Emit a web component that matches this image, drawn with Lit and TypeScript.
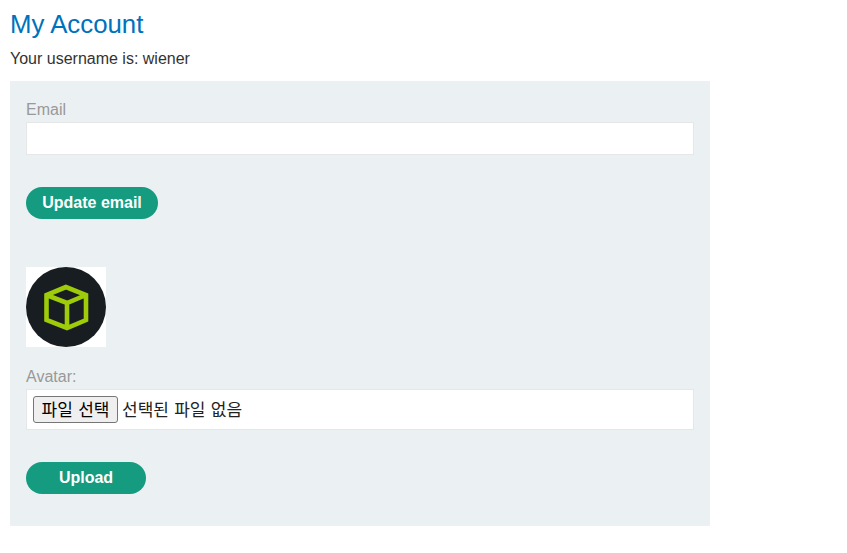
import { LitElement, html, css } from "lit";
import { customElement } from "lit/decorators.js";

@customElement("app-root")
export class AppRoot extends LitElement {
  static styles = css`
    :host {
      display: block;
      box-sizing: border-box;
      width: 847px;
      height: 553px;
      padding: 0 10px;
      background: #fff;
      color: #333332;
      font-family: "Liberation Sans", Arial, sans-serif;
      font-size: 16px;
      overflow: hidden;
    }
    * { box-sizing: border-box; }
    h1 {
      margin: 0;
      padding-top: 9px;
      height: 48px;
      font-size: 25.8px;
      line-height: 30px;
      font-weight: 400;
      color: #0071bc;
    }
    .user {
      margin: 0;
      height: 33px;
      line-height: 22px;
    }
    .panel {
      display: flex;
      flex-direction: column;
      align-items: flex-start;
      width: 700px;
      padding: 16px 16px 32px;
      background: #ebf0f2;
    }
    label {
      display: block;
      height: 25px;
      line-height: 25px;
      color: #999;
    }
    .text {
      display: block;
      width: 100%;
      height: 33px;
      margin: 0 0 32px;
      background: #fff;
      border: 1px solid #e6e6e6;
      padding: 0 8px;
      font: inherit;
    }
    .btn {
      height: 32px;
      border: 0;
      border-radius: 25px;
      background: #159b7f;
      color: #fff;
      font: bold 16px "Liberation Sans", Arial, sans-serif;
      padding: 0;
    }
    .update { width: 132px; margin-bottom: 48px; }
    .upload { width: 120px; }
    .avatar {
      display: block;
      width: 80px;
      height: 80px;
      margin-bottom: 17px;
    }
    .file {
      display: flex;
      align-items: center;
      gap: 4px;
      width: 100%;
      height: 41px;
      margin-bottom: 32px;
      padding: 0 6px;
      background: #fff;
      border: 1px solid #e6e6e6;
      font-family: "Noto Sans CJK KR", "Liberation Sans", sans-serif;
      font-size: 17px;
      word-spacing: 1.5px;
      line-height: 25px;
      color: #222;
    }
    .note { position: relative; top: -1px; }
    .pick {
      height: 27px;
      width: 85px;
      padding: 0 0 2px;
      background: #efefef;
      border: 1px solid #767676;
      border-radius: 3px;
      color: #000;
      font: inherit;
      word-spacing: inherit;
      line-height: 23px;
      white-space: nowrap;
    }
  `;

  render() {
    return html`
      <h1>My Account</h1>
      <p class="user">Your username is: wiener</p>
      <form class="panel" @submit=${(e: Event) => e.preventDefault()}>
        <label for="email">Email</label>
        <input class="text" id="email" type="email" />
        <button class="btn update">Update email</button>
        <svg class="avatar" viewBox="0 0 80 80" role="img" aria-label="Avatar">
          <rect width="80" height="80" fill="#fff" />
          <circle cx="40" cy="40" r="40" fill="#181d21" />
          <path
            d="M40 20 L20.5 28 V53 L41 61 L60 53 V28 Z M20.5 28 L41 36 L60 28 M41 36 V61"
            fill="none"
            stroke="#9ecb0a"
            stroke-width="4.6"
            stroke-linejoin="miter"
          />
        </svg>
        <label>Avatar:</label>
        <div class="file">
          <button class="pick" type="button">파일 선택</button>
          <span class="note">선택된 파일 없음</span>
        </div>
        <button class="btn upload">Upload</button>
      </form>
    `;
  }
}
